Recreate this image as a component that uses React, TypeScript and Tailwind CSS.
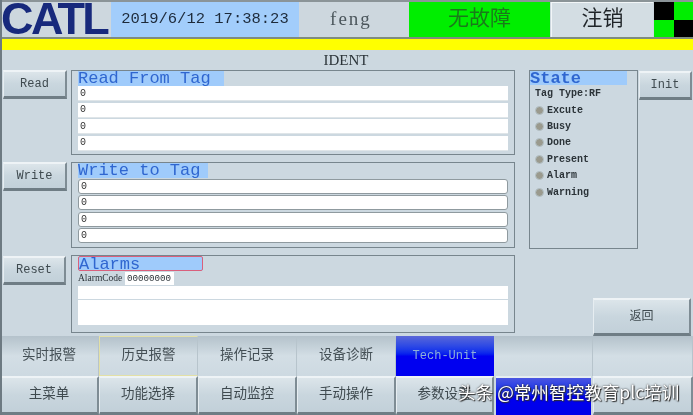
const mono = "font-['Liberation_Mono','Noto_Sans_CJK_SC',monospace]";

function Btn({ label, className = "" }: { label: string; className?: string }) {
  return (
    <div
      className={`flex items-center justify-center border-t-2 border-l border-t-[#eef3f6] border-l-[#e6edf1] border-r-2 border-b-[3px] border-r-[#7e8c94] border-b-[#6f7d85] bg-gradient-to-b from-[#dce5ea] via-[#c9d6de] to-[#c2d0d9] text-[#3f4a4f] ${className}`}
    >
      {label}
    </div>
  );
}

function Tab({ label, className = "" }: { label?: string; className?: string }) {
  return (
    <div className={`flex items-center justify-center border-r border-r-[#b7c4cc] bg-gradient-to-b from-[#b4c2cb] via-[#d3dee5] to-[#cdd9e1] text-[13.5px] text-[#444f55] ${className}`}>
      {label}
    </div>
  );
}

function Title({ label, className = "" }: { label: string; className?: string }) {
  return (
    <div className={`h-[15px] overflow-hidden bg-[#9fcbfb] text-[17px] leading-[16px] text-[#2f66d0] ${className}`}>
      {label}
    </div>
  );
}

function Row({ rounded = false }: { rounded?: boolean }) {
  return (
    <div
      className={`flex h-[15px] w-[430px] items-center bg-white pl-[2px] text-[10px] text-[#333] ${
        rounded ? "rounded-[3px] border border-[#8f9a9f]" : "border-b border-[#dfe5e8]"
      }`}
    >
      0
    </div>
  );
}

function Lamp({ label }: { label: string }) {
  return (
    <div className="flex h-[16.4px] items-center gap-[3px] pl-[5px]">
      <span className="h-[9px] w-[9px] rounded-full border border-[#b4c2c8] bg-[#9a9a8e]" />
      <span>{label}</span>
    </div>
  );
}

export default function App() {
  return (
    <div className={`flex h-[415px] w-[693px] flex-col overflow-hidden border-l-2 border-[#6d7a82] bg-[#ccd8e0] ${mono} relative blur-[0.4px]`}>
      <div className="-ml-[2px] flex h-[39px] shrink-0 border-y-2 border-t-[#8b9498] border-b-[#7f8c7f] bg-[#cdd7de]">
        <div className="h-full w-[111px] overflow-hidden pl-[1px] font-['Liberation_Sans'] text-[45px] font-bold leading-[34px] tracking-[-2.6px] text-[#17297c]">
          CATL
        </div>
        <div className="flex w-[188px] items-center justify-center bg-[#a2cdfb] text-[15.5px] text-[#1d2a3a]">
          2019/6/12 17:38:23
        </div>
        <div className="flex w-[110px] items-center justify-center pr-[6px] font-['Liberation_Serif'] text-[19px] tracking-[2px] text-[#4b565c]">feng</div>
        <div className="flex w-[141px] items-center justify-center bg-[#00ee00] text-[21px] text-[#1a7a1a]">无故障</div>
        <div className="ml-[1px] flex w-[102px] items-center justify-center border-t border-l border-[#f2f6f8] bg-[#d3dde3] text-[21px] text-[#1f2428]">注销</div>
        <div className="ml-[1px] grid w-[39px] grid-cols-2 grid-rows-2">
          <div className="bg-black" />
          <div className="bg-[#00ee00]" />
          <div className="bg-[#00ee00]" />
          <div className="bg-black" />
        </div>
      </div>
      <div className="-ml-[2px] h-[11px] shrink-0 bg-[#ffff00]" />

      <div className="flex h-[286px] shrink-0 flex-col">
        <div className="flex h-[20px] shrink-0 items-end justify-center pr-[3px] font-['Liberation_Serif'] text-[15px] leading-[20px] text-[#2b3338]">
          IDENT
        </div>
        <div className="flex min-h-0 flex-1">
          <div className="flex w-[69px] shrink-0 flex-col pl-[1px] text-[12px]">
            <Btn label="Read" className="h-[29px] w-[64px]" />
            <Btn label="Write" className="mt-[63px] h-[29px] w-[64px]" />
            <Btn label="Reset" className="mt-[65px] h-[29px] w-[63px]" />
          </div>

          <div className="flex w-[444px] shrink-0 flex-col">
            <div className="flex h-[85px] flex-col gap-[1.5px] border border-[#77858d] pl-[6px]">
              <Title label="Read From Tag" className="-mb-[1.5px] w-[146px]" />
              <Row />
              <Row />
              <Row />
              <Row />
            </div>
            <div className="mt-[7px] flex h-[86px] flex-col gap-[1.5px] border border-[#77858d] pl-[6px]">
              <Title label="Write to Tag" className="-mb-[1px] w-[130px]" />
              <Row rounded />
              <Row rounded />
              <Row rounded />
              <Row rounded />
            </div>
            <div className="mt-[7px] flex h-[78px] flex-col border border-[#77858d] pl-[6px]">
              <Title label="Alarms" className="w-[125px] rounded-[2px] border border-[#d9607c] leading-[15px]" />
              <div className="mt-[1px] flex h-[13px] items-center text-[9px] text-[#2b3338]">
                <span className="w-[47px] overflow-hidden whitespace-nowrap font-['Liberation_Serif'] text-[9.5px]">AlarmCode</span>
                <span className="flex h-[13px] w-[49px] items-center bg-white pl-[2px] text-[9.2px]">00000000</span>
              </div>
              <div className="mt-[1px] h-[13px] w-[430px] bg-white" />
              <div className="mt-[1px] h-[25px] w-[430px] bg-white" />
            </div>
          </div>

          <div className="ml-[14px] flex flex-1 flex-col">
            <div className="flex">
              <div className="flex h-[179px] w-[109px] shrink-0 flex-col border border-[#77858d] text-[10px] font-bold text-[#2b3338]">
                <div className="mr-[10px] h-[14px] overflow-hidden bg-[#9fcbfb] text-[17px] leading-[15px] text-[#2f66d0]">State</div>
                <div className="mb-[1px] mt-[2px] pl-[5px] leading-[14px]">Tag Type:RF</div>
                <Lamp label="Excute" />
                <Lamp label="Busy" />
                <Lamp label="Done" />
                <Lamp label="Present" />
                <Lamp label="Alarm" />
                <Lamp label="Warning" />
              </div>
              <Btn label="Init" className="ml-[1px] mt-[1px] h-[29px] w-[53px] text-[12px]" />
            </div>
            <Btn label="返回" className="ml-[64px] mt-[49px] h-[38px] w-[98px] text-[12px]" />
          </div>
        </div>
      </div>

      <div className="-ml-[2px] grid h-[79px] shrink-0 grid-cols-[99px_99px_99px_99px_98px_99px_100px] grid-rows-[40px_39px]">
        <Tab label="实时报警" />
        <Tab label="历史报警" className="border border-[#e3e0a6]" />
        <Tab label="操作记录" />
        <Tab label="设备诊断" />
        <div className="flex items-center justify-center bg-gradient-to-b from-[#5a66d8] via-[#0000f0] to-[#0000f0] text-[12px] text-[#8fb0d8]">Tech-Unit</div>
        <Tab />
        <Tab />
        <Btn label="主菜单" className="text-[13.5px]" />
        <Btn label="功能选择" className="text-[13.5px]" />
        <Btn label="自动监控" className="text-[13.5px]" />
        <Btn label="手动操作" className="text-[13.5px]" />
        <Btn label="参数设置" className="text-[13.5px]" />
        <div className="mx-[2px] border-t-2 border-t-[#e6edf1] bg-gradient-to-b from-[#4a55e0] via-[#0000f0] to-[#0000e8]" />
        <Btn label="" />
      </div>

      <div className="absolute left-[456px] top-[381px] whitespace-nowrap font-['Noto_Sans_CJK_SC',sans-serif] text-[17.6px] leading-[22px] text-white [text-shadow:0_0_2px_#222,1px_1px_1px_#333]">
        头条 @常州智控教育plc培训
      </div>
    </div>
  );
}
